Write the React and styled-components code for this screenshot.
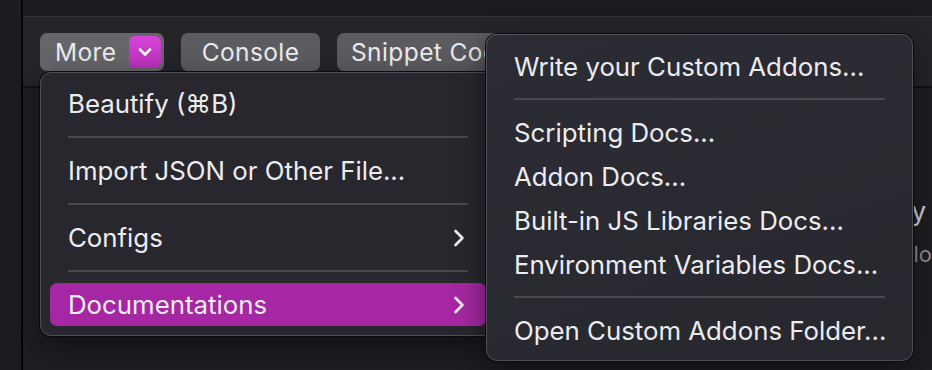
import React from 'react';
import styled, { createGlobalStyle } from 'styled-components';

const GlobalStyle = createGlobalStyle`
  html, body {
    margin: 0;
    padding: 0;
    width: 932px;
    height: 370px;
    overflow: hidden;
    background: #1f1e23;
    font-family: Inter, "Open Sans", "Liberation Sans", sans-serif;
    -webkit-font-smoothing: antialiased;
  }
`;

const Page = styled.div`
  position: relative;
  display: flex;
  width: 932px;
  height: 370px;
  overflow: hidden;
`;

const Sidebar = styled.div`
  width: 21px;
  flex-shrink: 0;
  background: #1d1c21;
  border-right: 2px solid #050505;
`;

const Main = styled.div`
  flex: 1;
  display: flex;
  flex-direction: column;
  min-width: 0;
`;

const TopStrip = styled.div`
  height: 16px;
  background: #1c1b20;
  border-bottom: 1px solid #343339;
`;

const Toolbar = styled.div`
  display: flex;
  align-items: flex-start;
  gap: 17px;
  height: 71px;
  padding: 16px 0 0 17px;
  box-sizing: border-box;
  background: #252429;
  border-bottom: 2px solid #111014;
`;

const ToolButton = styled.div`
  display: flex;
  align-items: center;
  justify-content: ${p => (p.$split ? 'space-between' : 'center')};
  height: 38px;
  width: ${p => p.$width}px;
  padding: ${p => (p.$split ? '0 3px 0 15px' : '0')};
  box-sizing: border-box;
  border-radius: 7px;
  background: ${p => (p.$active ? '#66656a' : '#5c5b60')};
  color: #ececee;
  font-size: 24.5px;
  letter-spacing: 0.4px;
  white-space: nowrap;
  flex-shrink: 0;
`;

const Caret = styled.span`
  display: flex;
  align-items: center;
  justify-content: center;
  width: 32px;
  height: 32px;
  border-radius: 6px;
  background: linear-gradient(#d744d8, #bb2fbd);
`;

const Content = styled.div`
  flex: 1;
  display: flex;
  flex-direction: column;
  align-items: flex-end;
  padding-top: 108px;
  gap: 14px;
  white-space: nowrap;
`;

const HintTitle = styled.div`
  font-size: 26px;
  color: #d9d9dd;
  margin-right: 6px;
`;

const HintText = styled.div`
  font-size: 22px;
  color: #8f8e94;
  margin-right: -26px;
`;

const Menu = styled.div`
  position: absolute;
  left: ${p => p.$left}px;
  top: ${p => p.$top}px;
  width: ${p => p.$width}px;
  box-sizing: border-box;
  padding: ${p => p.$pad};
  display: flex;
  flex-direction: column;
  border-radius: 11px;
  background: ${p => p.$bg};
  border: 1px solid #4f4e55;
  box-shadow: 0 0 0 1px #0c0c0f, 0 10px 30px rgba(0, 0, 0, 0.5);
`;

const Item = styled.div`
  display: flex;
  align-items: center;
  justify-content: space-between;
  height: ${p => p.$h}px;
  padding: 0 21px 0 18px;
  border-radius: 7px;
  font-size: 25.8px;
  color: #ececef;
  white-space: nowrap;
  background: ${p => (p.$selected ? '#a527a3' : 'transparent')};
`;

const Separator = styled.div`
  height: 2px;
  margin: ${p => p.$gap}px 18px;
  background: #4a4950;
`;

const Chevron = () => (
  <svg width="12" height="18" viewBox="0 0 12 18">
    <polyline points="2.5,2 9.5,9 2.5,16" fill="none" stroke="#ececee" strokeWidth="2.6" strokeLinecap="round" strokeLinejoin="round" />
  </svg>
);

const ChevronDown = () => (
  <svg width="14" height="10" viewBox="0 0 14 10">
    <polyline points="2,2.5 7,7.5 12,2.5" fill="none" stroke="#ffffff" strokeWidth="2.6" strokeLinecap="round" strokeLinejoin="round" />
  </svg>
);

const mainItems = [
  { label: 'Beautify (⌘B)' },
  { label: 'Import JSON or Other File...' },
  { label: 'Configs', sub: true },
  { label: 'Documentations', sub: true, selected: true },
];

const docGroups = [
  ['Write your Custom Addons...'],
  ['Scripting Docs...', 'Addon Docs...', 'Built-in JS Libraries Docs...', 'Environment Variables Docs...'],
  ['Open Custom Addons Folder...'],
];

const App = () => {
  return (
    <>
      <GlobalStyle />
      <Page>
        <Sidebar />
        <Main>
          <TopStrip />
          <Toolbar>
            <ToolButton $split $active $width={124}>
              More
              <Caret><ChevronDown /></Caret>
            </ToolButton>
            <ToolButton $width={139}>Console</ToolButton>
            <ToolButton $width={190}>Snippet Code</ToolButton>
          </Toolbar>
          <Content>
            <HintTitle>Empty</HintTitle>
            <HintText>to load</HintText>
          </Content>
        </Main>

        <Menu $left={40} $top={72} $width={456} $pad="9px" $bg="#28272e">
          {mainItems.map((item, i) => (
            <React.Fragment key={item.label}>
              {i > 0 && <Separator $gap={11} />}
              <Item $h={43} $selected={item.selected}>
                <span>{item.label}</span>
                {item.sub && <Chevron />}
              </Item>
            </React.Fragment>
          ))}
        </Menu>

        <Menu $left={486} $top={34} $width={427} $pad="9px 9px 8px" $bg="linear-gradient(160deg, #2c2c34, #27272e)">
          {docGroups.map((group, g) => (
            <React.Fragment key={g}>
              {g > 0 && <Separator $gap={10} />}
              {group.map(label => (
                <Item key={label} $h={44}>{label}</Item>
              ))}
            </React.Fragment>
          ))}
        </Menu>
      </Page>
    </>
  );
};

export default App;
